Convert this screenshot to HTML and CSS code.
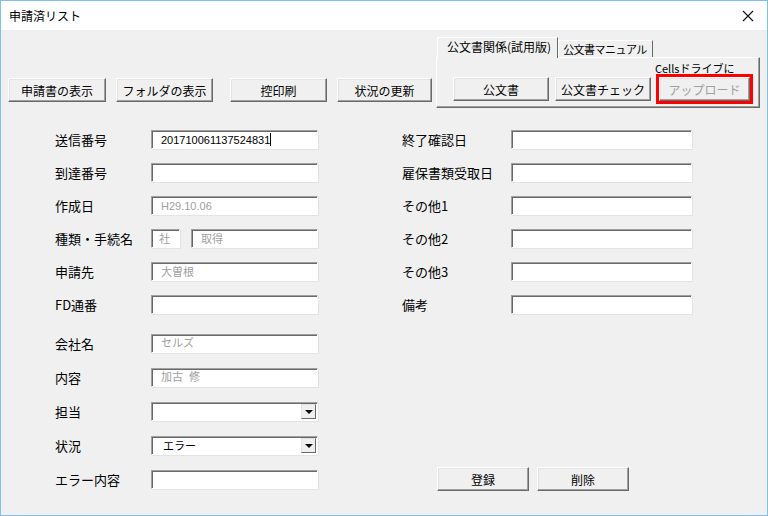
FILE: index.html
```html
<!DOCTYPE html>
<html lang="ja">
<head>
    <meta charset="UTF-8">
    <title>申請済リスト</title>
    <link rel="stylesheet" href="styles.css">
</head>
<body>
<div class="window">

    <div class="titlebar">
        <span class="title">申請済リスト</span>
        <svg class="close" width="12" height="12" viewBox="0 0 12 12">
            <path d="M1 1 L11 11 M11 1 L1 11" stroke="#111" stroke-width="1.1" fill="none"/>
        </svg>
    </div>

    <div class="content">

        <!-- pulsanti in alto + schede -->
        <div class="toolbar">
            <div class="tool-buttons">
                <button class="btn b-show">申請書の表示</button>
                <button class="btn b-folder">フォルダの表示</button>
                <button class="btn b-print">控印刷</button>
                <button class="btn b-update">状況の更新</button>
            </div>

            <div class="tabs">
                <div class="tab-strip">
                    <div class="tab active">公文書関係(試用版)</div>
                    <div class="tab manual">公文書マニュアル</div>
                </div>
                <div class="tab-panel">
                    <div class="panel-note">Cellsドライブに</div>
                    <div class="panel-buttons">
                        <button class="btn b-doc">公文書</button>
                        <button class="btn b-check">公文書チェック</button>
                        <button class="btn b-upload" disabled>アップロード</button>
                    </div>
                </div>
            </div>
        </div>

        <!-- modulo -->
        <div class="form">
            <div class="col col-left">
                <div class="row">
                    <span class="label">送信番号</span>
                    <div class="field">201710061137524831<span class="caret"></span></div>
                </div>
                <div class="row">
                    <span class="label">到達番号</span>
                    <div class="field"></div>
                </div>
                <div class="row">
                    <span class="label">作成日</span>
                    <div class="field dim">H29.10.06</div>
                </div>
                <div class="row">
                    <span class="label">種類・手続名</span>
                    <div class="field dim small">社</div>
                    <div class="field dim rest">取得</div>
                </div>
                <div class="row">
                    <span class="label">申請先</span>
                    <div class="field dim">大曽根</div>
                </div>
                <div class="row">
                    <span class="label">FD通番</span>
                    <div class="field"></div>
                </div>
                <div class="row tall first-tall">
                    <span class="label">会社名</span>
                    <div class="field dim">セルズ</div>
                </div>
                <div class="row tall">
                    <span class="label">内容</span>
                    <div class="field dim">加古&nbsp;&nbsp;修</div>
                </div>
                <div class="row tall">
                    <span class="label">担当</span>
                    <div class="field combo"><span class="combo-text"></span><span class="combo-arrow"></span></div>
                </div>
                <div class="row tall">
                    <span class="label">状況</span>
                    <div class="field combo"><span class="combo-text">エラー</span><span class="combo-arrow"></span></div>
                </div>
                <div class="row tall">
                    <span class="label">エラー内容</span>
                    <div class="field"></div>
                </div>
            </div>

            <div class="col col-right">
                <div class="row">
                    <span class="label">終了確認日</span>
                    <div class="field"></div>
                </div>
                <div class="row">
                    <span class="label">雇保書類受取日</span>
                    <div class="field"></div>
                </div>
                <div class="row">
                    <span class="label">その他1</span>
                    <div class="field"></div>
                </div>
                <div class="row">
                    <span class="label">その他2</span>
                    <div class="field"></div>
                </div>
                <div class="row">
                    <span class="label">その他3</span>
                    <div class="field"></div>
                </div>
                <div class="row">
                    <span class="label">備考</span>
                    <div class="field"></div>
                </div>

                <div class="actions">
                    <button class="btn b-action">登録</button>
                    <button class="btn b-action">削除</button>
                </div>
            </div>
        </div>

    </div>
</div>
</body>
</html>
```

FILE: styles.css
```css
/* --- GENERALE --- */
html, body {
    margin: 0;
    padding: 0;
    background: #f0f0f0;
}

.window {
    width: 768px;
    height: 516px;
    box-sizing: border-box;
    border: 1px solid #7cc2ee;
    background: #f0f0f0;
    font-family: "Noto Sans CJK JP", "Liberation Sans", sans-serif;
    color: #000;
    overflow: hidden;
}

/* --- BARRA DEL TITOLO --- */
.titlebar {
    height: 29px;
    background: #fff;
    display: flex;
    align-items: center;
    padding: 0 13px 0 8px;
}

.title {
    font-size: 12px;
}

.close {
    margin-left: auto;
}

.content {
    padding: 7px 7px 0 7px;
}

/* --- PULSANTI --- */
.btn {
    height: 24px;
    padding: 0;
    box-sizing: border-box;
    background: #f0f0f0;
    border: 1px solid;
    border-color: #fff #696969 #696969 #fff;
    box-shadow: inset -1px -1px 0 #a0a0a0, inset 1px 1px 0 #e3e3e3;
    font-family: "Noto Sans CJK JP", sans-serif;
    font-size: 12px;
    color: #000;
}

.btn:disabled {
    color: #a0a0a0;
}

.b-show { width: 98px; }
.b-folder { width: 97px; margin-left: 10px; }
.b-print { width: 97px; margin-left: 17px; }
.b-update { width: 95px; margin-left: 10px; }

/* --- TOOLBAR --- */
.toolbar {
    display: flex;
    align-items: flex-end;
}

.tool-buttons {
    display: flex;
    margin-bottom: 6px;
}

.tabs {
    margin-left: auto;
    width: 324px;
}

.tab-strip {
    display: flex;
    height: 20px;
    align-items: flex-end;
}

.tab {
    box-sizing: border-box;
    height: 17px;
    border: 1px solid;
    border-color: #fff #696969 transparent #fff;
    border-bottom: none;
    font-size: 12px;
    line-height: 16px;
    padding: 0 5px;
    background: #f0f0f0;
}

.tab.manual {
    width: 95px;
    font-size: 11px;
    letter-spacing: -0.5px;
    padding: 0 4px;
    white-space: nowrap;
}

.tab.active {
    height: 21px;
    margin-left: 1px;
    margin-bottom: -1px;
    padding: 0 6px 0 9px;
    position: relative;
    z-index: 1;
    line-height: 17px;
}

.tab-panel {
    box-sizing: border-box;
    height: 51px;
    border: 1px solid;
    border-color: #fff #696969 #696969 #fff;
    box-shadow: inset -1px -1px 0 #a0a0a0;
    padding: 3px 0 0 16px;
}

.panel-note {
    font-size: 11px;
    line-height: 14px;
    padding-left: 202px;
    height: 15px;
}

.panel-buttons {
    display: flex;
    margin-top: 1px;
}

.b-doc { width: 96px; }
.b-check { width: 96px; margin-left: 6px; }
.b-upload {
    width: 91px;
    margin-left: 8px;
    outline: 3px solid #ff0000;
}

/* --- MODULO --- */
.form {
    display: flex;
    margin-top: 15px;
}

.col {
    display: flex;
    flex-direction: column;
}

.col-left {
    padding-left: 47px;
}

.col-right {
    margin-left: 84px;
}

.row {
    display: flex;
    align-items: center;
    height: 33px;
}

.row.tall {
    height: 34px;
}

.row.first-tall {
    margin-top: 5px;
}

.label {
    font-size: 13px;
    width: 96px;
    flex-shrink: 0;
}

.col-right .label {
    width: 109px;
}

.field {
    box-sizing: border-box;
    width: 167px;
    height: 19px;
    background: #fff;
    border: 1px solid;
    border-color: #a0a0a0 #fff #fff #a0a0a0;
    box-shadow: inset 1px 1px 0 #696969, 1px 1px 0 #e3e3e3;
    font-family: "Liberation Sans", "Noto Sans CJK JP", sans-serif;
    font-size: 11px;
    line-height: 16px;
    padding-left: 9px;
    display: flex;
    align-items: center;
    white-space: nowrap;
}

.col-right .field {
    width: 181px;
}

.field.dim {
    color: #a0a0a0;
}

.field.small {
    width: 29px;
    padding-left: 7px;
}

.field.rest {
    width: 127px;
    margin-left: 11px;
}

.caret {
    display: inline-block;
    width: 1px;
    height: 13px;
    background: #000;
}

/* --- COMBO --- */
.combo {
    padding: 0 1px 0 11px;
}

.combo-text {
    flex: 1;
    font-family: "Noto Sans CJK JP", sans-serif;
}

.combo-arrow {
    box-sizing: border-box;
    width: 15px;
    height: 15px;
    background: #f0f0f0;
    border: 1px solid;
    border-color: #e3e3e3 #696969 #696969 #e3e3e3;
    position: relative;
}

.combo-arrow::after {
    content: "";
    position: absolute;
    left: 3px;
    top: 5px;
    border-left: 4px solid transparent;
    border-right: 4px solid transparent;
    border-top: 4px solid #000;
}

/* --- AZIONI --- */
.actions {
    margin-top: auto;
    height: 34px;
    display: flex;
    align-items: center;
    padding-left: 35px;
}

.b-action {
    width: 92px;
    margin-right: 8px;
}
```
